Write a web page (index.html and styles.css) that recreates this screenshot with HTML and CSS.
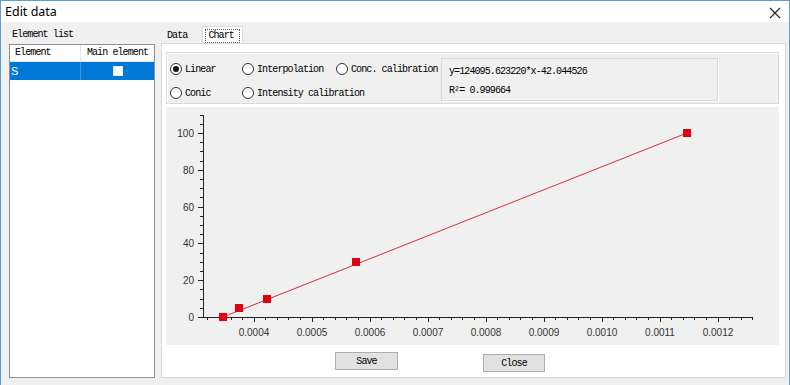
FILE: index.html
```html
<!DOCTYPE html>
<html lang="en">
<head>
    <meta charset="UTF-8">
    <title>Edit data</title>
    <link rel="stylesheet" href="styles.css">
</head>
<body>
    <div class="window">
        <div class="titlebar">
            <span class="title">Edit data</span>
            <svg class="close-x" width="12" height="12" viewBox="0 0 12 12">
                <path d="M1 1L11 11M11 1L1 11" stroke="#222" stroke-width="1.1" fill="none"/>
            </svg>
        </div>
        <div class="main">
            <div class="left">
                <div class="list-label">Element list</div>
                <div class="list">
                    <div class="list-row list-head">
                        <div class="cell c1">Element</div>
                        <div class="cell c2">Main element</div>
                    </div>
                    <div class="list-row selected">
                        <div class="cell c1">S</div>
                        <div class="cell c2"><span class="check"></span></div>
                    </div>
                </div>
            </div>
            <div class="right">
                <div class="tabs">
                    <span class="tab">Data</span>
                    <span class="tab active"><span class="focus">Chart</span></span>
                </div>
                <div class="page">
                    <div class="group">
                        <div class="radios">
                            <label class="radio"><span class="dot checked"></span>Linear</label>
                            <label class="radio"><span class="dot"></span>Interpolation</label>
                            <label class="radio"><span class="dot"></span>Conc. calibration</label>
                            <label class="radio"><span class="dot"></span>Conic</label>
                            <label class="radio span2"><span class="dot"></span>Intensity calibration</label>
                        </div>
                        <div class="formula">
                            <div class="formula-line">y=124095.623220*x-42.044526</div>
                            <div class="formula-line">R²= 0.999664</div>
                        </div>
                    </div>
                    <div class="chart">
                        <svg width="613" height="238" viewBox="0 0 613 238" shape-rendering="crispEdges">
                            <g stroke="#222" stroke-width="1" fill="none">
                                <path d="M37.5 8V210.5H587"/>
                                <path d="M32 210.5h5M32 173.5h5M32 136.5h5M32 100.5h5M32 63.5h5M32 26.5h5"/>
                                <path d="M34 201.5h3M34 192.5h3M34 182.5h3M34 164.5h3M34 155.5h3M34 146.5h3M34 127.5h3M34 118.5h3M34 109.5h3M34 90.5h3M34 81.5h3M34 72.5h3M34 54.5h3M34 44.5h3M34 35.5h3M34 17.5h3M34 8.5h3"/>
                                <path d="M88.5 210v5M146.5 210v5M204.5 210v5M262.5 210v5M320.5 210v5M378.5 210v5M436.5 210v5M494.5 210v5M552.5 210v5"/>
                                <path d="M41.5 210v3M53.5 210v3M65.5 210v3M76.5 210v3M99.5 210v3M111.5 210v3M122.5 210v3M134.5 210v3M157.5 210v3M169.5 210v3M180.5 210v3M192.5 210v3M215.5 210v3M227.5 210v3M238.5 210v3M250.5 210v3M273.5 210v3M285.5 210v3M296.5 210v3M308.5 210v3M331.5 210v3M343.5 210v3M354.5 210v3M366.5 210v3M389.5 210v3M401.5 210v3M412.5 210v3M424.5 210v3M447.5 210v3M459.5 210v3M470.5 210v3M482.5 210v3M505.5 210v3M517.5 210v3M528.5 210v3M540.5 210v3M563.5 210v3M575.5 210v3M586.5 210v3"/>
                            </g>
                            <g class="axis-text" text-anchor="end">
                                <text x="28" y="214">0</text>
                                <text x="28" y="177">20</text>
                                <text x="28" y="140">40</text>
                                <text x="28" y="104">60</text>
                                <text x="28" y="67">80</text>
                                <text x="28" y="30">100</text>
                            </g>
                            <g class="axis-text" text-anchor="middle">
                                <text x="88" y="229">0.0004</text>
                                <text x="146" y="229">0.0005</text>
                                <text x="204" y="229">0.0006</text>
                                <text x="262" y="229">0.0007</text>
                                <text x="320" y="229">0.0008</text>
                                <text x="378" y="229">0.0009</text>
                                <text x="436" y="229">0.0010</text>
                                <text x="494" y="229">0.0011</text>
                                <text x="552" y="229">0.0012</text>
                            </g>
                            <line x1="57" y1="210" x2="521" y2="26" stroke="#d0303c" stroke-width="1" shape-rendering="auto"/>
                            <g fill="#e3000f">
                                <rect x="53" y="206" width="8" height="8"/>
                                <rect x="69" y="197" width="8" height="8"/>
                                <rect x="97" y="188" width="8" height="8"/>
                                <rect x="186" y="151" width="8" height="8"/>
                                <rect x="517" y="22" width="8" height="8"/>
                            </g>
                        </svg>
                    </div>
                    <div class="actions">
                        <button class="btn">Save</button>
                        <button class="btn btn-close">Close</button>
                    </div>
                </div>
            </div>
        </div>
    </div>
</body>
</html>
```

FILE: styles.css
```css
body {
    margin: 0;
    padding: 0;
    background: #f0f0f0;
    font-family: 'Liberation Mono', 'DejaVu Sans Mono', monospace;
    font-size: 10px;
    letter-spacing: -0.9px;
    color: #000;
}
.window {
    width: 790px;
    height: 385px;
    box-sizing: border-box;
    border: 1px solid #5a9fd6;
    border-bottom: none;
    background: #f0f0f0;
    overflow: hidden;
}
.titlebar {
    height: 21px;
    background: #fff;
    display: flex;
    align-items: center;
    justify-content: space-between;
    padding: 0 8px 0 4px;
}
.title {
    font-family: 'Noto Sans', 'Liberation Sans', sans-serif;
    font-size: 12.5px;
    letter-spacing: 0;
    color: #000;
}
.close-x {
    display: block;
    margin-top: 2px;
}
.main {
    display: flex;
    gap: 6px;
    padding: 4px 3px 0 8px;
}
.left {
    width: 146px;
}
.list-label {
    height: 18px;
    line-height: 14px;
    padding: 2px 0 0 3px;
    box-sizing: border-box;
}
.list {
    height: 334px;
    box-sizing: border-box;
    border: 1px solid #8c9096;
    background: #fff;
}
.list-row {
    display: flex;
    height: 18px;
    line-height: 18px;
}
.list-head {
    height: 16px;
    line-height: 16px;
    border-bottom: 1px solid #e5e5e5;
}
.cell {
    box-sizing: border-box;
}
.c1 {
    width: 71px;
    padding-left: 5px;
    border-right: 1px solid #e5e5e5;
}
.c2 {
    flex: 1;
    text-align: center;
    display: flex;
    align-items: center;
    justify-content: center;
}
.selected {
    background: #0078d7;
    color: #fff;
}
.selected .c1 {
    padding-left: 1px;
    border-right-color: #3f97dc;
    font-family: 'Liberation Sans', sans-serif;
    letter-spacing: 0;
    font-size: 11px;
}
.check {
    display: block;
    width: 10px;
    height: 10px;
    box-sizing: border-box;
    background: #fff;
    border: 1px solid #e8e8e8;
}
.right {
    width: 625px;
}
.tabs {
    height: 17px;
    display: flex;
    align-items: flex-end;
}
.tab {
    height: 17px;
    line-height: 20px;
    padding: 0 13px 0 6px;
    box-sizing: border-box;
}
.tab.active {
    width: 41px;
    margin-left: 2px;
    padding: 2px 2px 0;
    background: #fff;
    border: 1px solid #d9d9d9;
    border-bottom: none;
    line-height: 12px;
}
.focus {
    display: block;
    border: 1px dotted #555;
    padding-left: 2px;
}
.page {
    height: 335px;
    box-sizing: border-box;
    border: 1px solid #d9d9d9;
    background: #fff;
    padding: 8px 6px 0 4px;
}
.group {
    height: 52px;
    box-sizing: border-box;
    border: 1px solid #dcdcdc;
    box-shadow: inset 1px 1px 0 #fff;
    background: #f0f0f0;
    display: flex;
}
.radios {
    width: 274px;
    display: grid;
    grid-template-columns: 72px 94px 1fr;
    grid-template-rows: 24px 24px;
    padding: 4px 0 0 3px;
    box-sizing: border-box;
}
.radio {
    display: flex;
    align-items: center;
    gap: 3px;
    white-space: nowrap;
}
.span2 {
    grid-column: span 2;
}
.dot {
    width: 12px;
    height: 12px;
    box-sizing: border-box;
    border: 1px solid #333;
    border-radius: 50%;
    background: #fff;
    display: flex;
    align-items: center;
    justify-content: center;
}
.dot.checked::after {
    content: '';
    width: 6px;
    height: 6px;
    border-radius: 50%;
    background: #111;
}
.formula {
    width: 277px;
    height: 43px;
    margin-top: 5px;
    box-sizing: border-box;
    border: 1px solid #dadada;
    box-shadow: 1px 1px 0 #fff;
    padding: 3px 0 0 7px;
}
.formula-line {
    height: 19px;
    line-height: 19px;
}
.chart {
    margin-top: 3px;
    height: 238px;
    width: 613px;
    background: #f0f0f0;
}
.chart svg {
    display: block;
}
.axis-text {
    font-family: 'Liberation Sans', sans-serif;
    font-size: 10px;
    letter-spacing: 0;
    fill: #333;
}
.actions {
    display: flex;
    align-items: flex-start;
    padding: 7px 0 0 169px;
}
.btn {
    width: 63px;
    height: 18px;
    padding: 0;
    background: #e1e1e1;
    border: 1px solid #adadad;
    font-family: 'Liberation Mono', 'DejaVu Sans Mono', monospace;
    font-size: 10px;
    letter-spacing: -0.9px;
    color: #000;
}
.btn-close {
    width: 62px;
    margin: 2px 0 0 85px;
}
```
